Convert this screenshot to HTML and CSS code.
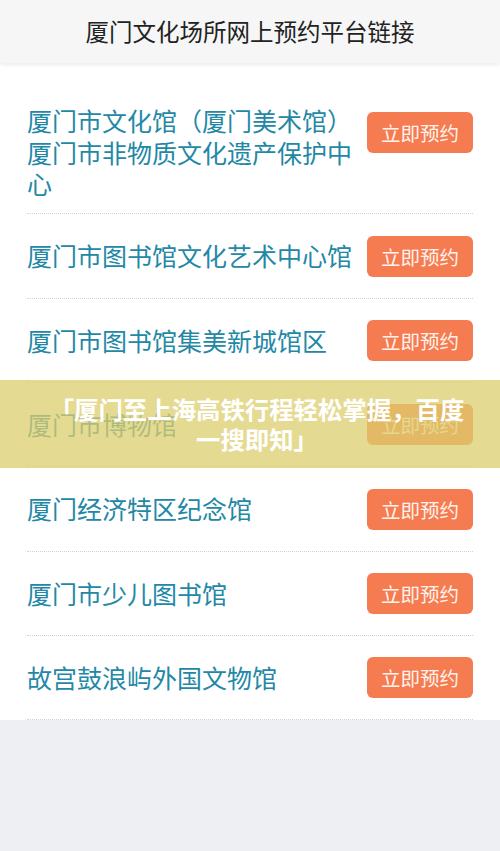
FILE: index.html
```html
<!DOCTYPE html>
<html lang="zh-CN">
<head>
<meta charset="utf-8">
<link rel="stylesheet" href="styles.css">
</head>
<body>
<div class="page">
  <header class="topbar">厦门文化场所网上预约平台链接</header>
  <main class="list">
    <div class="row">
      <div class="name">厦门市文化馆（厦门美术馆）厦门市非物质文化遗产保护中心</div>
      <div class="btnbox"><span class="btn">立即预约</span></div>
    </div>
    <div class="row">
      <div class="name">厦门市图书馆文化艺术中心馆</div>
      <div class="btnbox"><span class="btn">立即预约</span></div>
    </div>
    <div class="row">
      <div class="name">厦门市图书馆集美新城馆区</div>
      <div class="btnbox"><span class="btn">立即预约</span></div>
    </div>
    <div class="row">
      <div class="name">厦门市博物馆</div>
      <div class="btnbox"><span class="btn">立即预约</span></div>
    </div>
    <div class="row">
      <div class="name">厦门经济特区纪念馆</div>
      <div class="btnbox"><span class="btn">立即预约</span></div>
    </div>
    <div class="row">
      <div class="name">厦门市少儿图书馆</div>
      <div class="btnbox"><span class="btn">立即预约</span></div>
    </div>
    <div class="row">
      <div class="name">故宫鼓浪屿外国文物馆</div>
      <div class="btnbox"><span class="btn">立即预约</span></div>
    </div>
  </main>
  <div class="banner">「厦门至上海高铁行程轻松掌握，百度一搜即知」</div>
</div>
</body>
</html>
```
FILE: styles.css
```css
html, body {
  margin: 0;
  padding: 0;
}
body {
  background: #eeeff3;
  font-family: "Noto Sans CJK SC", "Noto Sans", sans-serif;
}
.page {
  position: relative;
  width: 500px;
  min-height: 851px;
}
.topbar {
  height: 63px;
  background: #f6f6f6;
  color: #222;
  font-size: 23.5px;
  line-height: 63px;
  text-align: center;
  box-shadow: 0 2px 4px rgba(0, 0, 0, 0.08);
  position: relative;
  z-index: 1;
}
.list {
  background: #fff;
  padding: 28px 27px 0;
}
.row {
  display: flex;
  align-items: flex-start;
  justify-content: space-between;
  padding: 14px 0 13.7px;
  border-bottom: 1px dotted #cfd2d6;
}
.name {
  width: 330px;
  color: #2388a6;
  font-size: 25px;
  line-height: 31.5px;
  min-height: 55.7px;
  display: flex;
  align-items: center;
}
.btnbox {
  height: 55.7px;
  display: flex;
  align-items: center;
}
.btn {
  display: block;
  width: 106px;
  height: 41px;
  line-height: 41px;
  text-align: center;
  background: #f57b50;
  color: #fff3ec;
  font-size: 19.5px;
  border-radius: 6px;
}
.banner {
  position: absolute;
  left: 0;
  right: 0;
  top: 380px;
  height: 88px;
  box-sizing: border-box;
  padding: 14px 30px 0 44px;
  background: rgba(220, 205, 110, 0.75);
  color: #fff;
  font-weight: 700;
  font-size: 24.4px;
  line-height: 30px;
  text-align: center;
}
```
